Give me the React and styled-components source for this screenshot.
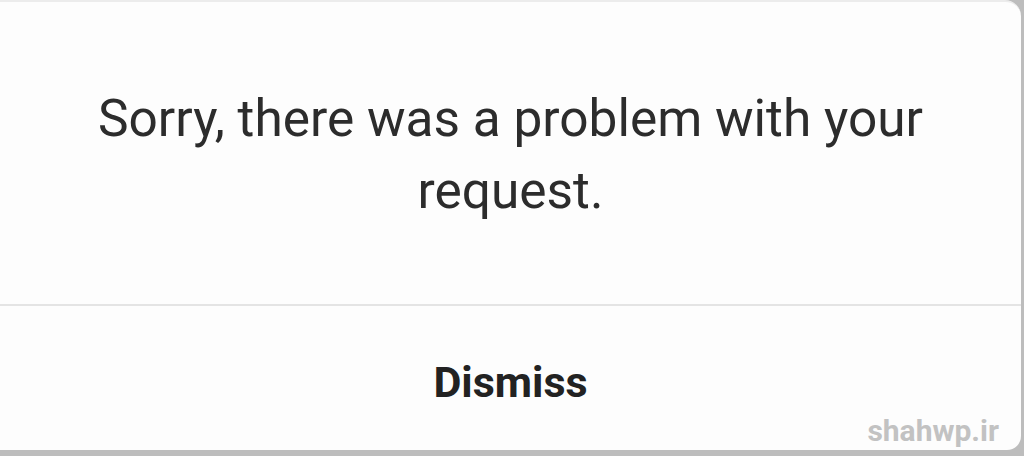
import styled, { createGlobalStyle } from "styled-components";

const GlobalStyle = createGlobalStyle`
  html, body {
    margin: 0;
    padding: 0;
    background: #bdbdbd;
  }
  body {
    font-family: Roboto, "Liberation Sans", Arial, sans-serif;
  }
`;

const Dialog = styled.div`
  position: relative;
  box-sizing: border-box;
  width: 1021px;
  height: 450px;
  background: #fdfdfd;
  border-top: 2px solid #ececec;
  border-radius: 0 16px 14px 0;
  display: flex;
  flex-direction: column;
  overflow: hidden;
`;

const Message = styled.div`
  height: 302px;
  display: flex;
  align-items: center;
  justify-content: center;
  padding: 4px 60px 0;
  box-sizing: border-box;
  text-align: center;
  font-size: 51.4px;
  line-height: 72px;
  color: #2c2c2c;
`;

const Divider = styled.div`
  height: 2px;
  background: #e4e4e4;
`;

const Action = styled.button`
  flex: 1;
  border: none;
  background: transparent;
  font-family: inherit;
  font-size: 43px;
  font-weight: 700;
  color: #222;
  padding: 8px 0 0;
  cursor: pointer;
`;

const Watermark = styled.div`
  position: absolute;
  right: 22px;
  bottom: 2px;
  font-size: 30px;
  font-weight: 700;
  color: #c2c2c2;
`;

export default function App() {
  return (
    <>
      <GlobalStyle />
      <Dialog>
        <Message>Sorry, there was a problem with your request.</Message>
        <Divider />
        <Action>Dismiss</Action>
        <Watermark>shahwp.ir</Watermark>
      </Dialog>
    </>
  );
}
